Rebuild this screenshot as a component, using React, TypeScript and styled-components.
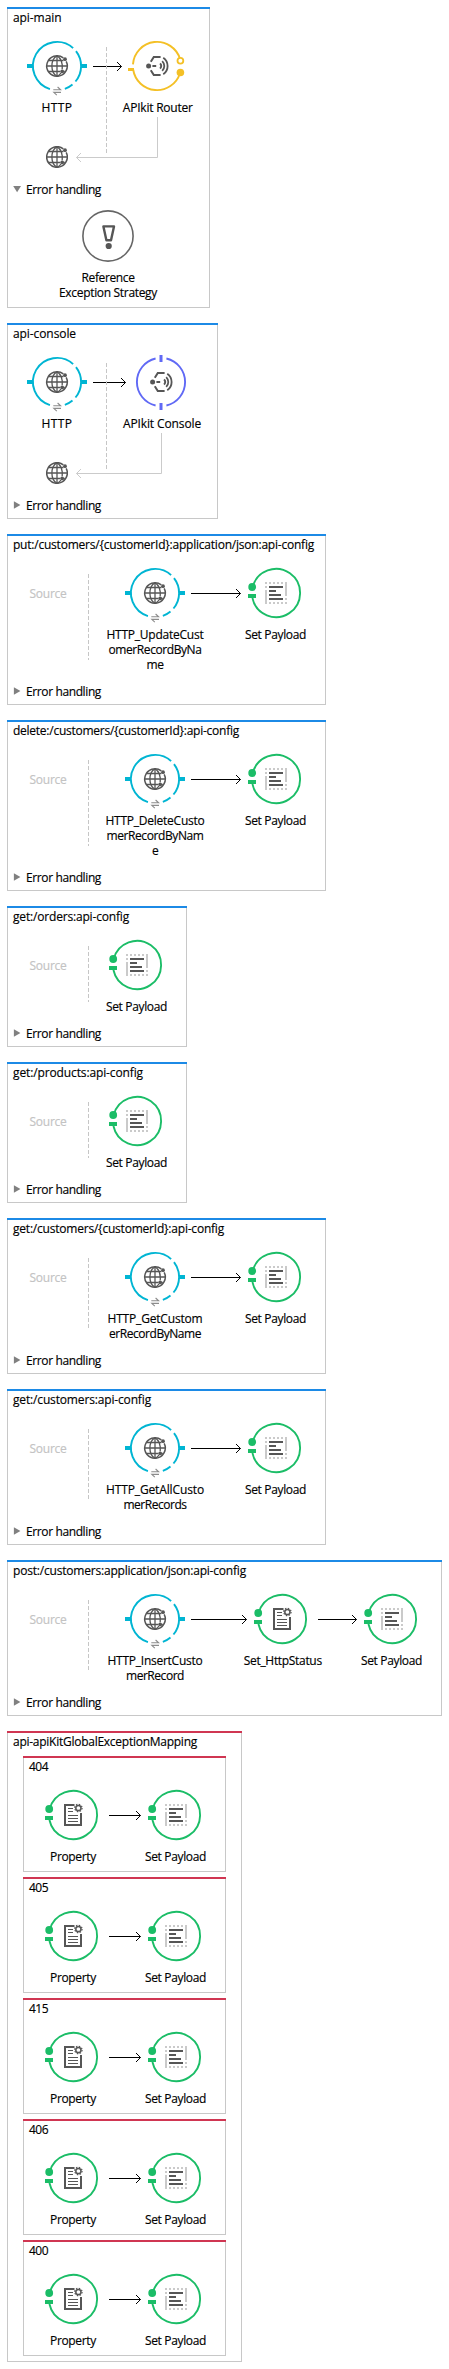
import React, { useLayoutEffect, useRef, useState } from "react";
import styled, { createGlobalStyle } from "styled-components";

const GlobalStyle = createGlobalStyle`
  body { margin: 0; background: #fff; }
`;

const BLUE = "#1c8ae6";
const RED = "#d03652";
const CYAN = "#00b5d3";
const YELLOW = "#f4c026";
const VIOLET = "#6069f5";
const GREEN = "#1bbd67";
const INK = "#565656";
const RULE = "#c8c8c8";

/* ---------- text ---------- */

const TextLine = styled.span<{ $tone?: string }>`
  display: inline-block;
  height: 15px;
  line-height: 15px;
  white-space: pre;
  color: ${(p) => p.$tone ?? "#000"};
  -webkit-text-stroke: 0.15px currentColor;
`;

/* A single line whose letter spacing is tightened to a given width. */
function Line({ text, width, tone }: { text: string; width: number; tone?: string }) {
  const ref = useRef<HTMLSpanElement>(null);
  const [spacing, setSpacing] = useState(0);
  useLayoutEffect(() => {
    if (ref.current) {
      const natural = ref.current.getBoundingClientRect().width - spacing * text.length;
      setSpacing((width - natural) / text.length);
    }
  }, [text, width]);
  return (
    <TextLine ref={ref} $tone={tone} style={{ letterSpacing: `${spacing}px` }}>
      {text}
    </TextLine>
  );
}

/* ---------- layout ---------- */

const Canvas = styled.main`
  display: flex;
  flex-direction: column;
  align-items: flex-start;
  gap: 15px;
  padding: 7px;
  font: 12px "Open Sans", "Noto Sans", sans-serif;
`;

const Card = styled.section<{ $width: number; $accent: string; $bottom: number }>`
  box-sizing: border-box;
  width: ${(p) => p.$width}px;
  border: 1px solid ${RULE};
  border-top: 0;
  padding-bottom: ${(p) => p.$bottom}px;
  background: #fff;

  &::before {
    content: "";
    display: block;
    height: 2px;
    margin: 0 -1px;
    background: ${(p) => p.$accent};
  }
`;

const Title = styled.header`
  display: flex;
  padding: 1px 0 0 5px;
`;

const Body = styled.div`
  position: relative;
  padding-top: 16px;
`;

const Track = styled.div<{ $left?: number }>`
  display: flex;
  align-items: flex-start;
  padding-left: ${(p) => p.$left ?? 0}px;
`;

const NodeBox = styled.div<{ $size?: number }>`
  display: flex;
  flex: none;
  flex-direction: column;
  align-items: center;
  gap: ${(p) => (p.$size ? 8 : 9)}px;
  width: ${(p) => p.$size ?? 60}px;

  svg { display: block; flex: none; overflow: visible; }
`;

const Label = styled.div<{ $shift?: number }>`
  display: flex;
  flex-direction: column;
  align-items: center;
  margin-left: ${(p) => (p.$shift ?? 0) * 2}px;
`;

const ArrowSvg = styled.svg`
  display: block;
  flex: none;
  height: 50px;
  margin: 0 5px 0 6px;
`;

const SourceSlot = styled.div`
  display: flex;
  justify-content: center;
  box-sizing: border-box;
  width: 80px;
  padding-top: 18px;
`;

const Divider = styled.div`
  align-self: stretch;
  width: 1px;
  margin: 6px 0 12px;
  background: repeating-linear-gradient(to bottom, #c6c6c6 0 4px, transparent 4px 6px);
`;

const FloatingDivider = styled(Divider)`
  position: absolute;
  top: 22px;
  bottom: 15px;
  left: 98px;
  margin: 0;
`;

const ResponseRow = styled.div`
  display: flex;
  height: 55px;
  padding-left: 38px;

  svg { display: block; flex: none; }
`;

const ResponseGlobe = styled.svg`
  margin-top: 31px;
`;

const ErrorRow = styled.div`
  display: flex;
  align-items: center;
  gap: 5px;
  height: 15px;
  margin-top: 12px;
  padding-left: 5px;
`;

const Reference = styled.div`
  display: flex;
  padding: 13px 0 0 74px;
`;

const Mappings = styled.div`
  display: flex;
  flex-direction: column;
  gap: 5px;
  padding: 7px 0 0 15px;
`;

/* ---------- drawings ---------- */

function arc(from: number, to: number, r = 24.1, c = [30, 25]) {
  const pt = (d: number) => {
    const a = (d * Math.PI) / 180;
    return `${(c[0] + r * Math.cos(a)).toFixed(2)} ${(c[1] + r * Math.sin(a)).toFixed(2)}`;
  };
  return `M${pt(from)}A${r} ${r} 0 ${to - from > 180 ? 1 : 0} 1 ${pt(to)}`;
}

const GlobeMark = () => (
  <g fill="none" stroke={INK} strokeWidth="1.3">
    <path d={arc(-27, 308, 10.3, [0, 0])} strokeWidth="1.5" />
    <path d="M0 -10.3V10.3M-8.6 -5.5H6.4M-10.3 0H10.3M-8.6 5.5H3.2M7.2 5.5H8.6" />
    <path d="M0 -10.3C-6.8 -6.4 -6.8 6.4 0 10.3M0 -10.3C4.4 -7.6 5.8 -3.4 5.2 3.2M4 7C3 8.6 2 9.5 0 10.3" />
    <circle cx="8" cy="-6.8" r="1.9" fill={INK} stroke="none" />
    <circle cx="5.2" cy="5.4" r="1.9" fill={INK} stroke="none" />
  </g>
);

const ApiMark = () => (
  <g fill="none" stroke={INK} strokeWidth="2">
    <circle cx="-8.4" cy="0" r="2.5" fill={INK} stroke="none" />
    <path d="M-4.6 0H-.8M-6.2 -4.2L-3.2 -9H3.6M-6.2 4.2L-3.2 9H3.6" />
    <path d={arc(-43, 43, 3.7, [0.4, 0])} strokeWidth="1.8" />
    <path d={arc(-46, 46, 6.9, [0.4, 0])} strokeWidth="1.8" />
    <path d={arc(-55, 55, 10.2, [0.4, 0])} strokeWidth="1.8" />
  </g>
);

const PayloadMark = () => (
  <g shapeRendering="crispEdges">
    <g fill="#cacaca">
      {[-11, -7, -3, 1, 5].map((x) => (
        <rect key={x} x={x} y="-11" width="2" height="2" />
      ))}
      {[-7, -3, 1, 5, 9].map((x) => (
        <rect key={x} x={x} y="9" width="2" height="2" />
      ))}
      <rect x="-11" y="-7" width="2" height="2" />
      <rect x="-11" y="-3" width="2" height="14" />
      <rect x="9" y="-11" width="2" height="14" />
      <rect x="9" y="5" width="2" height="2" />
    </g>
    <path fill={INK} d="M-7 -7h14v2h-14zM-7 -3h7v2h-7zM-7 1h12v2h-12zM-7 5h14v2h-14z" />
  </g>
);

const PropertyMark = () => (
  <g fill="none" stroke={INK}>
    <path d="M1.5 -10H-8V10H8V-2" strokeWidth="2" />
    <path d="M-5 -6.5H0M-5 -3.5H0M-5 .5H5M-5 3.5H5M-5 6.5H5" strokeWidth="1.1" />
    <circle cx="5.4" cy="-7" r="2.6" strokeWidth="1.5" />
    <circle cx="5.4" cy="-7" r="3.7" strokeWidth="1.2" strokeDasharray="1.45 1.45" />
  </g>
);

const SwapMark = () => (
  <path
    d="M26.3 48.8H33.6L30.6 46M34 51.4H26.8L29.8 54.2"
    fill="none"
    stroke="#8c8c8c"
    strokeWidth="1.1"
  />
);

type Kind = "http" | "router" | "console" | "payload" | "property";

const discColour: Record<Kind, string> = {
  http: CYAN,
  router: YELLOW,
  console: VIOLET,
  payload: GREEN,
  property: GREEN,
};

const discArcs: Record<Kind, [number, number][]> = {
  http: [[-38, 40], [50, 71], [107, 312]],
  router: [[184, 343], [18, 171]],
  console: [[-77, 77], [103, 257]],
  payload: [[194, 528]],
  property: [[194, 528]],
};

function Disc({ kind }: { kind: Kind }) {
  const colour = discColour[kind];
  return (
    <svg width="60" height="50" viewBox="0 0 60 50">
      {discArcs[kind].map(([a, b]) => (
        <path key={a} d={arc(a, b)} fill="none" stroke={colour} strokeWidth="1.9" />
      ))}
      {kind === "http" && (
        <>
          <path d="M0 23h6v4h-6zM54 23h6v4h-6z" fill={colour} />
          <SwapMark />
        </>
      )}
      {kind === "router" && (
        <>
          <rect x="1" y="27" width="6" height="3" fill={colour} />
          <circle cx="53.4" cy="19.7" r="2.9" fill="#fff" stroke={colour} strokeWidth="1.8" />
          <circle cx="53.4" cy="31.5" r="3.8" fill={colour} />
        </>
      )}
      {kind === "console" && (
        <path d="M28.5 -2h3v7h-3zM28.5 46h3v7h-3z" fill={colour} />
      )}
      {(kind === "payload" || kind === "property") && (
        <>
          <circle cx="6.2" cy="19" r="3.9" fill={colour} />
          <rect x="2" y="26" width="8" height="4" fill={colour} />
        </>
      )}
      <g transform="translate(30 25)">
        {kind === "http" && <GlobeMark />}
        {(kind === "router" || kind === "console") && <ApiMark />}
        {kind === "payload" && <PayloadMark />}
        {kind === "property" && <PropertyMark />}
      </g>
    </svg>
  );
}

type TextSpec = [text: string, width: number];

function Node({ kind, lines, shift }: { kind: Kind; lines: TextSpec[]; shift?: number }) {
  return (
    <NodeBox>
      <Disc kind={kind} />
      <Label $shift={shift}>
        {lines.map(([text, width]) => (
          <Line key={text} text={text} width={width} />
        ))}
      </Label>
    </NodeBox>
  );
}

const Arrow = ({ length }: { length: number }) => (
  <ArrowSvg width={length}>
    <path
      d={`M0 25.5H${length - 0.5}M${length - 5} 21L${length - 0.5} 25.5L${length - 5} 30`}
      fill="none"
      stroke="#000"
      strokeWidth="1"
    />
  </ArrowSvg>
);

const ReturnPath = ({ width }: { width: number }) => (
  <svg width={width + 8} height="55">
    <path
      d={`M${width + 7.5} 2V42.5H8.5M13 38L8.5 42.5L13 47`}
      fill="none"
      stroke="#cbcbcb"
      strokeWidth="1"
    />
  </svg>
);

/* ---------- flows ---------- */

const ErrorHandling = ({ open }: { open?: boolean }) => (
  <ErrorRow>
    <svg width="8" height="9" viewBox="0 0 8 9">
      <path d={open ? "M.2 1H8L4.1 7.2Z" : "M.9 .3V7.7L7.4 4Z"} fill="#808080" />
    </svg>
    <Line text="Error handling" width={75} />
  </ErrorRow>
);

const Response = ({ width }: { width: number }) => (
  <ResponseRow>
    <ResponseGlobe width="22" height="22" viewBox="-11 -11 22 22">
      <GlobeMark />
    </ResponseGlobe>
    <ReturnPath width={width} />
  </ResponseRow>
);

const payload: TextSpec[] = [["Set Payload", 61]];

function ListenerFlow({
  name,
  width,
  kind,
  label,
  arrow,
  shift,
  back,
  bottom = 5,
  children,
}: {
  name: TextSpec;
  width: number;
  kind: Kind;
  label: TextSpec;
  arrow: number;
  shift: number;
  back: number;
  bottom?: number;
  children: React.ReactNode;
}) {
  return (
    <Card $width={width} $accent={BLUE} $bottom={bottom}>
      <Title>
        <Line text={name[0]} width={name[1]} />
      </Title>
      <Body>
        <Track $left={19}>
          <Node kind="http" lines={[["HTTP", 31]]} />
          <Arrow length={arrow} />
          <Node kind={kind} lines={[label]} shift={shift} />
        </Track>
        <Response width={back} />
        <FloatingDivider />
      </Body>
      {children}
    </Card>
  );
}

function ResourceFlow({
  name,
  width,
  request,
  status,
}: {
  name: TextSpec;
  width: number;
  request?: TextSpec[];
  status?: boolean;
}) {
  return (
    <Card $width={width} $accent={BLUE} $bottom={5}>
      <Title>
        <Line text={name[0]} width={name[1]} />
      </Title>
      <Body>
        <Track>
          <SourceSlot>
            <Line text="Source" width={37} tone="#c3c3c3" />
          </SourceSlot>
          <Divider />
          <Track $left={request ? 36 : 18}>
            {request && (
              <>
                <Node kind="http" lines={request} />
                <Arrow length={status ? 56 : 50} />
              </>
            )}
            {status && (
              <>
                <Node kind="property" lines={[["Set_HttpStatus", 78]]} shift={0.8} />
                <Arrow length={39} />
              </>
            )}
            <Node kind="payload" lines={payload} shift={-0.5} />
          </Track>
        </Track>
      </Body>
      <ErrorHandling />
    </Card>
  );
}

const Mapping = ({ code }: { code: string }) => (
  <Card $width={203} $accent={RED} $bottom={7}>
    <Title>
      <Line text={code} width={19} />
    </Title>
    <Body>
      <Track $left={19}>
        <Node kind="property" lines={[["Property", 46]]} />
        <Arrow length={32} />
        <Node kind="payload" lines={payload} shift={-0.5} />
      </Track>
    </Body>
  </Card>
);

export default function App() {
  return (
    <>
      <GlobalStyle />
      <Canvas>
        <ListenerFlow
          name={["api-main", 48.5]}
          width={203}
          kind="router"
          label={["APIkit Router", 70]}
          arrow={29}
          shift={0.8}
          back={82}
          bottom={7}
        >
          <ErrorHandling open />
          <Reference>
            <NodeBox $size={52}>
              <svg width="52" height="52" viewBox="-26 -26 52 52">
                <circle r="25.1" fill="none" stroke="#666" strokeWidth="1.6" />
                <path
                  d="M-4.6 -9.6H6L3 4.2H-1.6Z"
                  fill="none"
                  stroke={INK}
                  strokeWidth="2.4"
                  strokeLinejoin="round"
                />
                <circle cx=".7" cy="10" r="3.1" fill={INK} />
              </svg>
              <Label>
                <Line text="Reference" width={53} />
                <Line text="Exception Strategy" width={98} />
              </Label>
            </NodeBox>
          </Reference>
        </ListenerFlow>
        <ListenerFlow
          name={["api-console", 63]}
          width={211}
          kind="console"
          label={["APIkit Console", 78]}
          arrow={33}
          shift={1}
          back={86}
        >
          <ErrorHandling />
        </ListenerFlow>
        <ResourceFlow
          name={["put:/customers/{customerId}:application/json:api-config", 301]}
          width={319}
          request={[["HTTP_UpdateCust", 97], ["omerRecordByNa", 93], ["me", 17]]}
        />
        <ResourceFlow
          name={["delete:/customers/{customerId}:api-config", 226]}
          width={319}
          request={[["HTTP_DeleteCusto", 99], ["merRecordByNam", 97], ["e", 6]]}
        />
        <ResourceFlow name={["get:/orders:api-config", 116]} width={180} />
        <ResourceFlow name={["get:/products:api-config", 130]} width={180} />
        <ResourceFlow
          name={["get:/customers/{customerId}:api-config", 211]}
          width={319}
          request={[["HTTP_GetCustom", 95], ["erRecordByName", 92]]}
        />
        <ResourceFlow
          name={["get:/customers:api-config", 138]}
          width={319}
          request={[["HTTP_GetAllCusto", 98], ["merRecords", 63]]}
        />
        <ResourceFlow
          name={["post:/customers:application/json:api-config", 233]}
          width={435}
          request={[["HTTP_InsertCusto", 95], ["merRecord", 58]]}
          status
        />
        <Card $width={235} $accent={RED} $bottom={5}>
          <Title>
            <Line text="api-apiKitGlobalExceptionMapping" width={184} />
          </Title>
          <Mappings>
            {["404", "405", "415", "406", "400"].map((code) => (
              <Mapping key={code} code={code} />
            ))}
          </Mappings>
        </Card>
      </Canvas>
    </>
  );
}
